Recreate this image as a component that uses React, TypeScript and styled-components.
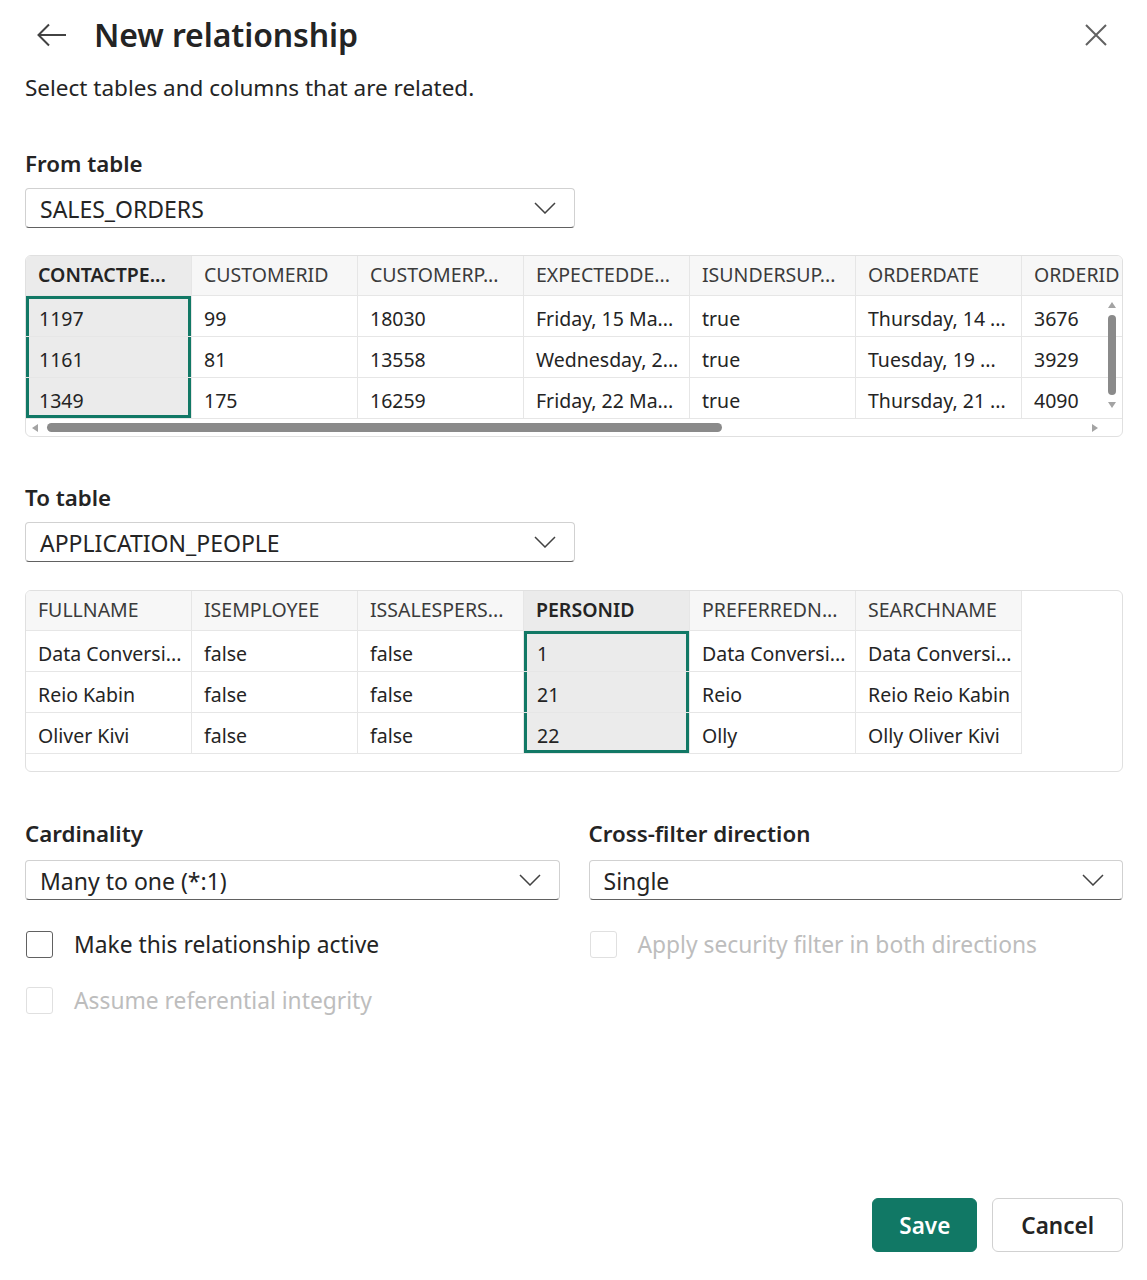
import styled, { createGlobalStyle } from "styled-components";

const GlobalStyle = createGlobalStyle`
  * { box-sizing: border-box; }
  body {
    margin: 0;
    background: #ffffff;
    color: #242424;
    font-family: "Noto Sans", "Open Sans", sans-serif;
  }
`;

const green = "#117865";

const Page = styled.div`
  min-height: 100vh;
  display: flex;
  flex-direction: column;
  padding: 12px 24px 28px 25px;
`;

const Header = styled.div`
  display: flex;
  align-items: center;
  height: 46px;
`;

const IconButton = styled.button`
  border: none;
  background: none;
  padding: 0;
  display: flex;
  align-items: center;
  justify-content: center;
  color: #424242;
  cursor: pointer;
`;

const BackButton = styled(IconButton)`
  margin-left: 12px;
  margin-right: 27px;
  width: 30px;
  height: 30px;
`;

const CloseButton = styled(IconButton)`
  margin-left: auto;
  margin-right: 16px;
  width: 22px;
  height: 22px;
  color: #616161;
`;

const Title = styled.h1`
  margin: 0;
  font-size: 32px;
  font-weight: 600;
  line-height: 44px;
  letter-spacing: -0.1px;
`;

const Subtitle = styled.p`
  margin: 15px 0 0;
  font-size: 22.5px;
  line-height: 30px;
  color: #242424;
`;

const Label = styled.div<{ $top: number }>`
  margin-top: ${(p) => p.$top}px;
  font-size: 22.3px;
  font-weight: 600;
  line-height: 30px;
`;

const Select = styled.div<{ $width?: number; $top?: number }>`
  margin-top: ${(p) => p.$top ?? 9}px;
  width: ${(p) => (p.$width ? `${p.$width}px` : "100%")};
  height: 40px;
  display: flex;
  align-items: center;
  padding: 0 18px 0 14px;
  border: 1px solid #d1d1d1;
  border-bottom-color: #616161;
  border-radius: 4px;
  font-size: 23px;
  color: #242424;
`;

const SelectText = styled.span`
  flex: 1;
  padding-top: 1px;
`;

const Frame = styled.div<{ $top: number }>`
  position: relative;
  margin-top: ${(p) => p.$top}px;
  border: 1px solid #e0e0e0;
  border-radius: 6px;
  overflow: hidden;
`;

const Grid = styled.div`
  overflow: hidden;
`;

const Row = styled.div<{ $cols: number }>`
  display: grid;
  grid-template-columns: repeat(${(p) => p.$cols}, 166px);
`;

const HeadCell = styled.div<{ $sel?: boolean }>`
  height: 40px;
  display: flex;
  align-items: center;
  padding: 0 12px 3px;
  white-space: nowrap;
  overflow: hidden;
  font-size: 19.5px;
  font-weight: ${(p) => (p.$sel ? 600 : 400)};
  color: ${(p) => (p.$sel ? "#242424" : "#3b3b3b")};
  background: ${(p) => (p.$sel ? "#ebebeb" : "#f7f7f7")};
  border-right: 1px solid #e6e6e6;
  border-bottom: 1px solid #e6e6e6;
`;

const Cell = styled.div<{ $sel?: boolean; $first?: boolean; $last?: boolean }>`
  height: 41px;
  display: flex;
  align-items: center;
  padding: 4px 12px 0 ${(p) => (p.$sel ? 13 : 12)}px;
  white-space: nowrap;
  overflow: hidden;
  font-size: 19.5px;
  color: #242424;
  background: ${(p) => (p.$sel ? "#ebebeb" : "#ffffff")};
  border-right: 1px solid #e6e6e6;
  border-bottom: 1px solid #e6e6e6;
  box-shadow: ${(p) =>
    p.$sel
      ? [
          `inset 3px 0 0 ${green}`,
          `inset -3px 0 0 ${green}`,
          p.$first ? `inset 0 3px 0 ${green}` : "",
          p.$last ? `inset 0 -3px 0 ${green}` : "",
        ]
          .filter(Boolean)
          .join(", ")
      : "none"};
`;

const HScroll = styled.div`
  height: 17px;
  display: flex;
  align-items: center;
  padding: 0 24px 0 6px;
`;

const HThumb = styled.div`
  margin-left: 9px;
  width: 675px;
  height: 9px;
  border-radius: 5px;
  background: #8a8a8a;
`;

const Arrow = styled.svg`
  fill: #a3a3a3;
  flex: none;
`;

const Spacer = styled.div`
  flex: 1;
`;

const Footer = styled.div`
  height: 17px;
`;

const VScroll = styled.div`
  position: absolute;
  right: 5px;
  top: 46px;
  width: 10px;
  display: flex;
  flex-direction: column;
  align-items: center;
`;

const VThumb = styled.div`
  margin: 7px 0;
  width: 8px;
  height: 80px;
  border-radius: 4px;
  background: #8a8a8a;
`;

const Columns = styled.div`
  display: grid;
  grid-template-columns: 1fr 1fr;
  column-gap: 29px;
`;

const Field = styled.div`
  display: flex;
  flex-direction: column;
`;

const Check = styled.label<{ $top: number; $disabled?: boolean }>`
  margin-top: ${(p) => p.$top}px;
  display: flex;
  align-items: center;
  gap: 21px;
  font-size: 22.8px;
  color: ${(p) => (p.$disabled ? "#bdbdbd" : "#242424")};
`;

const Box = styled.span<{ $disabled?: boolean }>`
  margin-left: 1px;
  width: 27px;
  height: 27px;
  border-radius: 3px;
  border: 1.5px solid ${(p) => (p.$disabled ? "#e0e0e0" : "#616161")};
  flex: none;
`;

const Actions = styled.div`
  margin-top: auto;
  display: flex;
  justify-content: flex-end;
  gap: 15px;
`;

const Button = styled.button<{ $primary?: boolean }>`
  height: 54px;
  padding: 0 ${(p) => (p.$primary ? 26 : 28)}px;
  border-radius: 6px;
  font-family: inherit;
  font-size: 22.5px;
  font-weight: 600;
  border: 1px solid ${(p) => (p.$primary ? green : "#d1d1d1")};
  background: ${(p) => (p.$primary ? green : "#ffffff")};
  color: ${(p) => (p.$primary ? "#ffffff" : "#242424")};
  cursor: pointer;
`;

const Chevron = () => (
  <svg width="22" height="12" viewBox="0 0 22 12">
    <path d="M1 1l10 10L21 1" fill="none" stroke="#424242" strokeWidth="1.5" />
  </svg>
);

const fromTable = {
  cols: ["CONTACTPE...", "CUSTOMERID", "CUSTOMERP...", "EXPECTEDDE...", "ISUNDERSUP...", "ORDERDATE", "ORDERID"],
  sel: 0,
  rows: [
    ["1197", "99", "18030", "Friday, 15 Ma...", "true", "Thursday, 14 ...", "3676"],
    ["1161", "81", "13558", "Wednesday, 2...", "true", "Tuesday, 19 ...", "3929"],
    ["1349", "175", "16259", "Friday, 22 Ma...", "true", "Thursday, 21 ...", "4090"],
  ],
};

const toTable = {
  cols: ["FULLNAME", "ISEMPLOYEE", "ISSALESPERS...", "PERSONID", "PREFERREDN...", "SEARCHNAME"],
  sel: 3,
  rows: [
    ["Data Conversi...", "false", "false", "1", "Data Conversi...", "Data Conversi..."],
    ["Reio Kabin", "false", "false", "21", "Reio", "Reio Reio Kabin"],
    ["Oliver Kivi", "false", "false", "22", "Olly", "Olly Oliver Kivi"],
  ],
};

type TableData = typeof fromTable;

function Preview({ data, top, scroll }: { data: TableData; top: number; scroll?: boolean }) {
  const n = data.cols.length;
  return (
    <Frame $top={top}>
      <Grid>
        <Row $cols={n}>
          {data.cols.map((c, i) => (
            <HeadCell key={c} $sel={i === data.sel}>
              {c}
            </HeadCell>
          ))}
        </Row>
        {data.rows.map((r, ri) => (
          <Row $cols={n} key={ri}>
            {r.map((v, i) => (
              <Cell
                key={i}
                $sel={i === data.sel}
                $first={ri === 0}
                $last={ri === data.rows.length - 1}
              >
                {v}
              </Cell>
            ))}
          </Row>
        ))}
      </Grid>
      {scroll ? (
        <>
          <HScroll>
            <Arrow width="6" height="8" viewBox="0 0 6 8">
              <polygon points="6,0 0,4 6,8" />
            </Arrow>
            <HThumb />
            <Spacer />
            <Arrow width="6" height="8" viewBox="0 0 6 8">
              <polygon points="0,0 6,4 0,8" />
            </Arrow>
          </HScroll>
          <VScroll>
            <Arrow width="8" height="6" viewBox="0 0 8 6">
              <polygon points="0,6 4,0 8,6" />
            </Arrow>
            <VThumb />
            <Arrow width="8" height="6" viewBox="0 0 8 6">
              <polygon points="0,0 8,0 4,6" />
            </Arrow>
          </VScroll>
        </>
      ) : (
        <Footer />
      )}
    </Frame>
  );
}

export default function App() {
  return (
    <>
      <GlobalStyle />
      <Page>
        <Header>
          <BackButton aria-label="Back">
            <svg width="30" height="24" viewBox="0 0 30 24">
              <path d="M29 12H2M12 1.5L1.5 12 12 22.5" fill="none" stroke="#424242" strokeWidth="2" />
            </svg>
          </BackButton>
          <Title>New relationship</Title>
          <CloseButton aria-label="Close">
            <svg width="22" height="22" viewBox="0 0 22 22">
              <path d="M1 1l20 20M21 1L1 21" fill="none" stroke="#616161" strokeWidth="2" />
            </svg>
          </CloseButton>
        </Header>
        <Subtitle>Select tables and columns that are related.</Subtitle>

        <Label $top={46}>From table</Label>
        <Select $width={550}>
          <SelectText>SALES_ORDERS</SelectText>
          <Chevron />
        </Select>
        <Preview data={fromTable} top={27} scroll />

        <Label $top={46}>To table</Label>
        <Select $width={550}>
          <SelectText>APPLICATION_PEOPLE</SelectText>
          <Chevron />
        </Select>
        <Preview data={toTable} top={28} />

        <Columns>
          <Field>
            <Label $top={47}>Cardinality</Label>
            <Select $top={11}>
              <SelectText>Many to one (*:1)</SelectText>
              <Chevron />
            </Select>
            <Check $top={29}>
              <Box />
              Make this relationship active
            </Check>
            <Check $top={25} $disabled>
              <Box $disabled />
              Assume referential integrity
            </Check>
          </Field>
          <Field>
            <Label $top={47}>Cross-filter direction</Label>
            <Select $top={11}>
              <SelectText>Single</SelectText>
              <Chevron />
            </Select>
            <Check $top={29} $disabled>
              <Box $disabled />
              Apply security filter in both directions
            </Check>
          </Field>
        </Columns>

        <Actions>
          <Button $primary>Save</Button>
          <Button>Cancel</Button>
        </Actions>
      </Page>
    </>
  );
}
